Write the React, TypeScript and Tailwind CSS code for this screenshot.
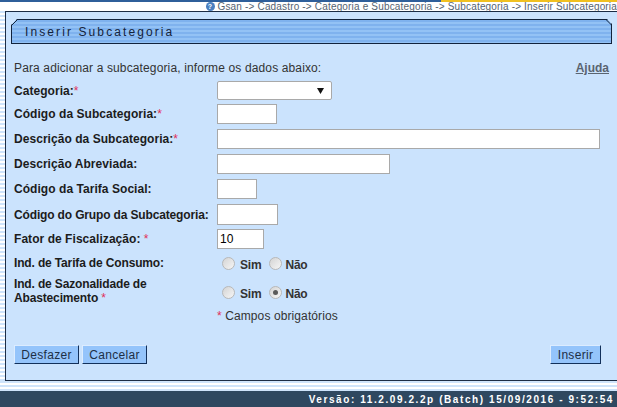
import React from "react";

const stripes =
  "bg-[repeating-linear-gradient(to_bottom,#cfe4fb_0px,#cfe4fb_2px,#ffffff_2px,#ffffff_4px)]";

function Req() {
  return <span className="text-[#e0305a] font-normal">*</span>;
}

function Field({
  label,
  width,
  value,
  height = "h-[20px]",
  tracking = "tracking-[0.05px]",
}: {
  label: React.ReactNode;
  width: string;
  value?: string;
  height?: string;
  tracking?: string;
}) {
  return (
    <div className={`flex items-center ${height}`}>
      <label className={`w-[203px] whitespace-nowrap font-bold text-[#1c1c1c] ${tracking}`}>{label}</label>
      <input
        readOnly
        value={value ?? ""}
        className={`${width} h-full bg-white border border-[#a9a9a9] px-[2px] text-[12px] text-black outline-none`}
      />
    </div>
  );
}

function Radio({ label, checked, gap }: { label: string; checked?: boolean; gap: string }) {
  return (
    <span className="flex items-center">
      <span className="w-[13px] h-[13px] rounded-full border border-[#b8b8b8] bg-gradient-to-br from-[#d4d4d4] to-[#f6f6f6] flex items-center justify-center">
        {checked && <span className="w-[5px] h-[5px] rounded-full bg-[#5a5a5a]" />}
      </span>
      <span className={`${gap} mt-[4px] font-bold text-[#333] tracking-[-0.2px]`}>{label}</span>
    </span>
  );
}

function RadioPair({ checked }: { checked?: boolean }) {
  return (
    <div className="flex items-center ml-[5px] gap-[8px]">
      <Radio label="Sim" gap="ml-[5px]" />
      <Radio label="Não" gap="ml-[3px]" checked={checked} />
    </div>
  );
}

function Btn({ children, width }: { children: React.ReactNode; width: string }) {
  return (
    <button className={`${width} h-[19px] bg-[#94c4fb] border border-t-[#dcecff] border-l-[#dcecff] border-r-[#12305a] border-b-[#12305a] text-[12px] tracking-[0.3px] text-[#1d2f45] leading-none`}>
      {children}
    </button>
  );
}

export default function App() {
  return (
    <div className="w-[617px] h-[407px] overflow-hidden flex flex-col bg-white font-['Liberation_Sans',Arial,sans-serif] text-[12px] text-[#333]">
      {/* barra do topo */}
      <div className="flex h-[2px] shrink-0">
        <div className="w-[441px] bg-[#2f5f9a]" />
        <div className="flex-1 bg-[#f0c020]" />
      </div>
      <div className="h-[9px] shrink-0 flex items-center justify-end whitespace-nowrap text-[10px] leading-none text-[#566472] tracking-[0.17px]">
        <span className="w-[9px] h-[9px] rounded-full bg-[#4a7fc0] mr-[3px] text-white text-[7px] flex items-center justify-center font-bold">
          ?
        </span>
        Gsan -&gt; Cadastro -&gt; Categoria e Subcategoria -&gt; Subcategoria -&gt; Inserir Subcategoria
      </div>

      <div className="flex flex-1 min-h-0">
        <div className={`w-[5px] shrink-0 ${stripes}`} />
        <div className="flex-1 min-w-0 flex flex-col">
          <div className="h-[370px] shrink-0 bg-[#cbe3fd] border border-[#1c2c44] border-r-0 pl-[5px] pt-[7px] flex flex-col">
            {/* título */}
            <div className="relative h-[25px] shrink-0 w-[601px]">
              <div className="h-full border border-[#12233c] flex items-center pl-[13px] text-[12px] tracking-[2.1px] text-[#14233a] [clip-path:polygon(6px_0,calc(100%-5px)_0,100%_5px,100%_100%,0_100%,0_6px)] bg-[repeating-linear-gradient(to_bottom,#7fb2ee_0px,#7fb2ee_2px,#93c2f5_2px,#93c2f5_4px)]">
                Inserir Subcategoria
              </div>
              <svg className="absolute left-0 top-0" width="7" height="7" viewBox="0 0 7 7">
                <path d="M0.5 6.5L6.5 0.5" stroke="#12233c" fill="none" />
              </svg>
              <svg className="absolute right-0 top-0" width="6" height="6" viewBox="0 0 6 6">
                <path d="M0 0.5L5.5 6" stroke="#12233c" fill="none" />
              </svg>
            </div>

            <div className="flex justify-between items-baseline mt-[17px] h-[14px] leading-[14px] pl-[3px] pr-[3px] w-[601px]">
              <span className="tracking-[0.13px]">Para adicionar a subcategoria, informe os dados abaixo:</span>
              <a className="font-bold underline text-[#5a6470]">Ajuda</a>
            </div>

            <div className="flex flex-col pl-[3px] mt-[6px] gap-[5px]">
              <div className="flex items-center h-[19px] -mb-[1px]">
                <label className="w-[203px] font-bold text-[#1c1c1c] tracking-[0.05px]">
                  Categoria:<Req />
                </label>
                <div className="w-[115px] h-full bg-white border border-[#a9a9a9] rounded-[2px] flex items-center justify-end pr-[7px]">
                  <svg width="7" height="6" viewBox="0 0 7 6">
                    <path d="M0 0h7L3.5 6z" fill="#111" />
                  </svg>
                </div>
              </div>
              <Field label={<>Código da Subcategoria:<Req /></>} width="w-[60px]" />
              <Field label={<>Descrição da Subcategoria:<Req /></>} width="w-[383px]" />
              <Field label="Descrição Abreviada:" width="w-[173px]" />
              <Field label="Código da Tarifa Social:" width="w-[40px]" />
              <div className="-mb-[1px]">
                <Field
                  label="Código do Grupo da Subcategoria:"
                  width="w-[61px]"
                  height="h-[21px]"
                  tracking="tracking-[-0.15px]"
                />
              </div>
              <Field label={<>Fator de Fiscalização: <Req /></>} width="w-[47px]" value="10" />
            </div>

            <div className="flex pl-[3px] mt-[4px] h-[20px] items-center">
              <span className="w-[203px] font-bold text-[#1c1c1c] tracking-[-0.15px]">Ind. de Tarifa de Consumo:</span>
              <RadioPair />
            </div>
            <div className="flex pl-[3px] mt-[2px] h-[32px] items-center">
              <span className="w-[203px] font-bold text-[#1c1c1c] tracking-[-0.15px] leading-[14px]">
                Ind. de Sazonalidade de
                <br />
                Abastecimento <Req />
              </span>
              <div className="mt-[2px]">
                <RadioPair checked />
              </div>
            </div>
            <div className="pl-[206px] mt-[2px] h-[14px] leading-[14px] tracking-[0.1px]">
              <Req /> Campos obrigatórios
            </div>

            <div className="flex justify-between mt-[22px] pl-[3px] w-[590px]">
              <div className="flex gap-[3px]">
                <Btn width="w-[65px]">Desfazer</Btn>
                <Btn width="w-[65px]">Cancelar</Btn>
              </div>
              <Btn width="w-[51px]">Inserir</Btn>
            </div>
          </div>
          <div className={`flex-1 -ml-[5px] ${stripes}`} />
        </div>
      </div>

      {/* rodapé */}
      <div className="h-[16px] shrink-0 bg-[#2f4860] flex items-center justify-end pr-[3px] text-[10px] font-bold text-white tracking-[1.58px] whitespace-nowrap">
        Versão: 11.2.09.2.2p (Batch) 15/09/2016 - 9:52:54
      </div>
    </div>
  );
}
